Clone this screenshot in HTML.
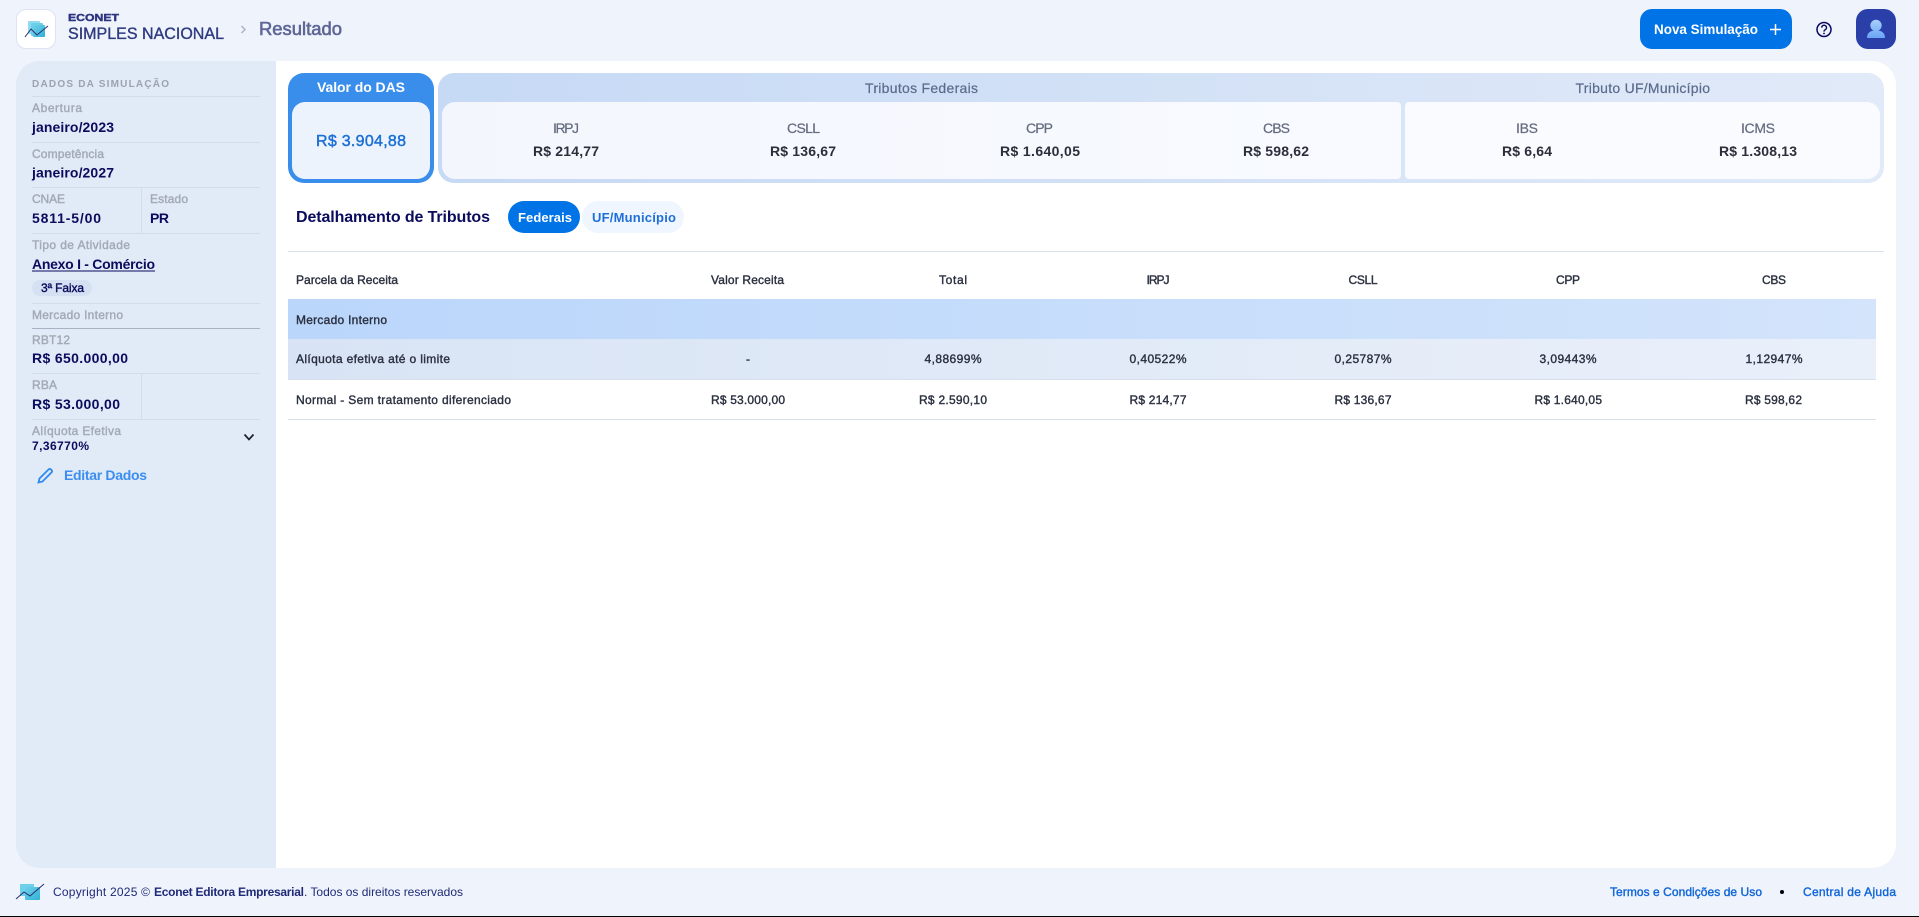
<!DOCTYPE html>
<html lang="pt-BR">
<head>
<meta charset="utf-8">
<title>Simples Nacional - Resultado</title>
<style>
html,body{margin:0;padding:0;width:1919px;height:917px;overflow:hidden;background:#eff3fb}
#page{position:relative;width:1919px;height:917px;overflow:hidden;background:#eff3fb;font-family:"Liberation Sans",sans-serif}
#page div{position:absolute;box-sizing:border-box}
svg{position:absolute;left:0;top:0}
text{font-family:"Liberation Sans",sans-serif;font-kerning:normal}
.b{font-weight:700}
.m{stroke:currentColor;stroke-width:.38;fill:currentColor}
.n{fill:currentColor}
.lab{font-size:12px;color:#a2a9b5}
.val{font-size:14px;font-weight:700;color:#0b0b5e}
.th{font-size:14px;color:#656c80;stroke:currentColor;stroke-width:.22}
.tv{font-size:14px;font-weight:700;color:#2c2f3a}
.td{font-size:12px;color:#2b3040}
.ft{font-size:12px;color:#1f2a78}
.ln{font-size:12px;color:#1066d8}
</style>
</head>
<body>
<div id="page">
  <!-- header logo -->
  <div style="left:16px;top:9px;width:40px;height:40px;background:#fff;border:1px solid #dde3f2;border-radius:10px"></div>
  <!-- frame -->
  <div style="left:16px;top:61px;width:260px;height:807px;background:#e1eaf7;border-radius:24px 0 0 24px"></div>
  <div style="left:276px;top:61px;width:1620px;height:807px;background:#fff;border-radius:0 24px 24px 0"></div>
  <!-- header button/avatar -->
  <div style="left:1640px;top:9px;width:152px;height:40px;background:#0073e6;border-radius:12px"></div>
  <div style="left:1856px;top:9px;width:40px;height:40px;background:#2a3fa8;border-radius:12px"></div>
  <!-- sidebar lines -->
  <div style="left:32px;top:96px;width:228px;height:1px;background:#d3dcea"></div>
  <div style="left:32px;top:142px;width:228px;height:1px;background:#d3dcea"></div>
  <div style="left:32px;top:187px;width:228px;height:1px;background:#d3dcea"></div>
  <div style="left:32px;top:233px;width:228px;height:1px;background:#d3dcea"></div>
  <div style="left:141px;top:187px;width:1px;height:46px;background:#d3dcea"></div>
  <div style="left:32px;top:303px;width:228px;height:1px;background:#d3dcea"></div>
  <div style="left:32px;top:328px;width:228px;height:1px;background:#a8b2c2"></div>
  <div style="left:32px;top:373px;width:228px;height:1px;background:#d3dcea"></div>
  <div style="left:141px;top:373px;width:1px;height:46px;background:#d3dcea"></div>
  <div style="left:32px;top:419px;width:228px;height:1px;background:#d3dcea"></div>
  <div style="left:32px;top:280px;width:60px;height:16px;background:#d5e1f3;border-radius:8px"></div>
  <!-- DAS card -->
  <div style="left:288px;top:73px;width:146px;height:110px;background:#3a8eeb;border-radius:16px"></div>
  <div style="left:292px;top:102px;width:138px;height:77px;background:#ecf3fc;border-radius:13px"></div>
  <!-- tributes card -->
  <div style="left:438px;top:73px;width:1446px;height:110px;background:linear-gradient(90deg,#c6d9f5,#e1eaf8);border-radius:16px"></div>
  <div style="left:442px;top:102px;width:959px;height:77px;background:linear-gradient(90deg,#f3f7fd,#f8faff);border-radius:13px 4px 4px 13px"></div>
  <div style="left:1405px;top:102px;width:475px;height:77px;background:#f9fbff;border-radius:4px 13px 13px 4px"></div>
  <!-- pills -->
  <div style="left:508px;top:201px;width:72px;height:32px;background:#0073e6;border-radius:16px"></div>
  <div style="left:582px;top:201px;width:102px;height:32px;background:#eff6ff;border-radius:16px"></div>
  <div style="left:288px;top:251px;width:1596px;height:1px;background:#dbe1ea"></div>
  <!-- table bands -->
  <div style="left:288px;top:299px;width:1588px;height:40px;background:linear-gradient(90deg,#bad6fb,#d3e4fb)"></div>
  <div style="left:288px;top:339px;width:1588px;height:41px;background:linear-gradient(90deg,#d8e4f5,#eaf0fa);border-bottom:1px solid #d8dfea"></div>
  <div style="left:288px;top:419px;width:1588px;height:1px;background:#d8dfea"></div>
  <!-- bottom edge -->
  <div style="left:0;top:916px;width:1919px;height:1px;background:#000"></div>

  <svg width="1919" height="917" viewBox="0 0 1919 917" xmlns="http://www.w3.org/2000/svg">
    <defs>
      <linearGradient id="lg" x1="0" y1="0" x2="1" y2="1"><stop offset="0" stop-color="#6fd0ea"/><stop offset="1" stop-color="#2fb2d6"/></linearGradient>
      <linearGradient id="av" gradientUnits="userSpaceOnUse" x1="0" y1="19" x2="0" y2="38"><stop offset="0" stop-color="#a9d0fb"/><stop offset="1" stop-color="#6aa5f5"/></linearGradient>
    </defs>

    <!-- logo icon -->
    <rect x="28" y="21" width="12" height="13" rx="1" fill="#8fdcf2"/>
    <rect x="31" y="23" width="12" height="13" rx="1" fill="#6ccfe9"/>
    <rect x="33" y="25" width="12" height="12" rx="1" fill="url(#lg)"/>
    <path d="M25 37L31 29L37 35L48 26" fill="none" stroke="#2c2f73" stroke-width="1"/>

    <!-- header text -->
    <text x="68" y="21" font-size="10" class="b" fill="#2c3480" textLength="51" lengthAdjust="spacingAndGlyphs" stroke="#2c3480" stroke-width=".4">ECONET</text>
    <text x="68" y="39" font-size="16.5" class="m" style="color:#2e3a80;stroke-width:.35" textLength="156" lengthAdjust="spacingAndGlyphs">SIMPLES NACIONAL</text>
    <path d="M241.5 26L245 29.5L241.5 33" fill="none" stroke="#aab3cf" stroke-width="1.5"/>
    <text x="259" y="35" font-size="18" class="m" style="color:#5e6696;stroke-width:.6" textLength="83" lengthAdjust="spacingAndGlyphs">Resultado</text>

    <text x="1654" y="34" font-size="14" class="b" fill="#fff" textLength="104" lengthAdjust="spacingAndGlyphs">Nova Simulação</text>
    <path d="M1770 29.5H1781M1775.5 24V35" stroke="#fff" stroke-width="1.5" fill="none"/>
    <circle cx="1824" cy="29.5" r="7" fill="none" stroke="#0a0a5e" stroke-width="1.5"/>
    <path d="M1821.7 27.6a2.4 2.4 0 1 1 3.6 2.1c-.9.5-1.3 1-1.3 1.9" fill="none" stroke="#0a0a5e" stroke-width="1.4"/>
    <circle cx="1824" cy="33.5" r=".9" fill="#0a0a5e"/>
    <circle cx="1876" cy="25.5" r="5.7" fill="url(#av)"/>
    <path d="M1867 38c0-5.500 3.500-7.500 9-7.500s9 2 9 7.500z" fill="url(#av)"/>

    <!-- sidebar -->
    <g>
      <text x="32" y="87" font-size="10" class="b" fill="#9ca3af" textLength="137">DADOS DA SIMULAÇÃO</text>
      <text x="32" y="112" class="lab m" textLength="50">Abertura</text>
      <text x="32" y="132" class="val n" textLength="82">janeiro/2023</text>
      <text x="32" y="158" class="lab m" textLength="72">Competência</text>
      <text x="32" y="177.500" class="val n" textLength="82">janeiro/2027</text>
      <text x="32" y="203" class="lab m" textLength="33">CNAE</text>
      <text x="150" y="203" class="lab m" textLength="38">Estado</text>
      <text x="32" y="223" class="val n" textLength="69">5811-5/00</text>
      <text x="150" y="223" class="val n" textLength="19">PR</text>
      <text x="32" y="249" class="lab m" textLength="98">Tipo de Atividade</text>
      <text x="32" y="269" class="val n" textLength="123">Anexo I - Comércio</text>
      <rect x="32" y="270.500" width="123" height="1" fill="#0b0b5e"/>
      <text x="41" y="292" font-size="12" class="m" style="color:#0b0b5e" textLength="43">3ª Faixa</text>
      <text x="32" y="319" class="lab m" textLength="91">Mercado Interno</text>
      <text x="32" y="344" class="lab m" textLength="38">RBT12</text>
      <text x="32" y="363" class="val n" textLength="96">R$ 650.000,00</text>
      <text x="32" y="389" class="lab m" textLength="25">RBA</text>
      <text x="32" y="409" class="val n" textLength="88">R$ 53.000,00</text>
      <text x="32" y="435" class="lab m" textLength="89">Alíquota Efetiva</text>
      <text x="32" y="450" font-size="12" class="b" fill="#0b0b5e" textLength="57">7,36770%</text>
      <path d="M244.500 434.500L249 439.500L253.500 434.500" fill="none" stroke="#1a1f33" stroke-width="1.7"/>
      <path d="M38.500 482.500l1-4L48.800 469.300a1.300 1.300 0 0 1 1.900 0l1 1a1.300 1.300 0 0 1 0 1.900L42.500 481.500z" fill="none" stroke="#2f8bef" stroke-width="1.800"/>
      <text x="64" y="480" font-size="14" class="b" fill="#3b8ef0" textLength="83">Editar Dados</text>
    </g>

    <!-- summary -->
    <text x="317" y="92" font-size="14" class="b" fill="#fff" textLength="88">Valor do DAS</text>
    <text x="316" y="146" font-size="16" class="m" style="color:#1b6fd6;stroke-width:.45" textLength="90">R$ 3.904,88</text>
    <text x="865" y="93" class="th m" style="color:#5b6b8c" textLength="113">Tributos Federais</text>
    <text x="1575.500" y="93" class="th m" style="color:#5b6b8c" textLength="134.500">Tributo UF/Município</text>

    <text x="553" y="133" class="th n" textLength="26">IRPJ</text>
    <text x="533" y="156" class="tv n" textLength="66">R$ 214,77</text>
    <text x="787" y="133" class="th n" textLength="33">CSLL</text>
    <text x="770" y="156" class="tv n" textLength="66">R$ 136,67</text>
    <text x="1026" y="133" class="th n" textLength="27">CPP</text>
    <text x="1000" y="156" class="tv n" textLength="80">R$ 1.640,05</text>
    <text x="1263" y="133" class="th n" textLength="27">CBS</text>
    <text x="1243" y="156" class="tv n" textLength="66">R$ 598,62</text>
    <text x="1516" y="133" class="th n" textLength="22">IBS</text>
    <text x="1502" y="156" class="tv n" textLength="50">R$ 6,64</text>
    <text x="1741" y="133" class="th n" textLength="34">ICMS</text>
    <text x="1719" y="156" class="tv n" textLength="78">R$ 1.308,13</text>

    <!-- detail heading -->
    <text x="296" y="222" font-size="16" class="b" fill="#0b0b5e" textLength="194">Detalhamento de Tributos</text>
    <text x="518" y="222" font-size="13" class="b" fill="#fff" textLength="54">Federais</text>
    <text x="592" y="222" font-size="13" class="b" fill="#1f6fd8" textLength="84">UF/Município</text>

    <!-- table -->
    <text x="296" y="284" class="td m" textLength="102">Parcela da Receita</text>
    <text x="711" y="284" class="td m" textLength="73">Valor Receita</text>
    <text x="939" y="284" class="td m" textLength="28">Total</text>
    <text x="1146.500" y="284" class="td m" textLength="23">IRPJ</text>
    <text x="1348.500" y="284" class="td m" textLength="29">CSLL</text>
    <text x="1556" y="284" class="td m" textLength="24">CPP</text>
    <text x="1762" y="284" class="td m" textLength="24">CBS</text>

    <text x="296" y="324" class="td m" textLength="91">Mercado Interno</text>

    <text x="296" y="363" class="td m" textLength="154">Alíquota efetiva até o limite</text>
    <text x="746" y="363" class="td m">-</text>
    <text x="924.500" y="363" class="td m" textLength="57">4,88699%</text>
    <text x="1129.500" y="363" class="td m" textLength="57">0,40522%</text>
    <text x="1334.500" y="363" class="td m" textLength="57">0,25787%</text>
    <text x="1539.500" y="363" class="td m" textLength="57">3,09443%</text>
    <text x="1745.500" y="363" class="td m" textLength="57">1,12947%</text>

    <text x="296" y="404" class="td m" textLength="215">Normal - Sem tratamento diferenciado</text>
    <text x="711" y="404" class="td m" textLength="74">R$ 53.000,00</text>
    <text x="919" y="404" class="td m" textLength="68">R$ 2.590,10</text>
    <text x="1129.500" y="404" class="td m" textLength="57">R$ 214,77</text>
    <text x="1334.500" y="404" class="td m" textLength="57">R$ 136,67</text>
    <text x="1534.500" y="404" class="td m" textLength="67.500">R$ 1.640,05</text>
    <text x="1745" y="404" class="td m" textLength="57">R$ 598,62</text>

    <!-- footer -->
    <rect x="20" y="884" width="14" height="12" fill="#6fd0ea"/>
    <rect x="25" y="887" width="15" height="13" rx="1" fill="url(#lg)"/>
    <path d="M16 899L24 892L30 896L44 884" fill="none" stroke="#2c2f73" stroke-width="1"/>
    <text x="53" y="896" class="ft n" textLength="97">Copyright 2025 ©</text>
    <text x="154" y="896" class="ft n b" textLength="150">Econet Editora Empresarial</text>
    <text x="304" y="896" class="ft n" textLength="159">. Todos os direitos reservados</text>
    <text x="1610" y="896" class="ln m" textLength="152">Termos e Condições de Uso</text>
    <circle cx="1782" cy="892" r="2" fill="#000"/>
    <text x="1803" y="896" class="ln m" textLength="93">Central de Ajuda</text>
  </svg>
</div>
</body>
</html>
